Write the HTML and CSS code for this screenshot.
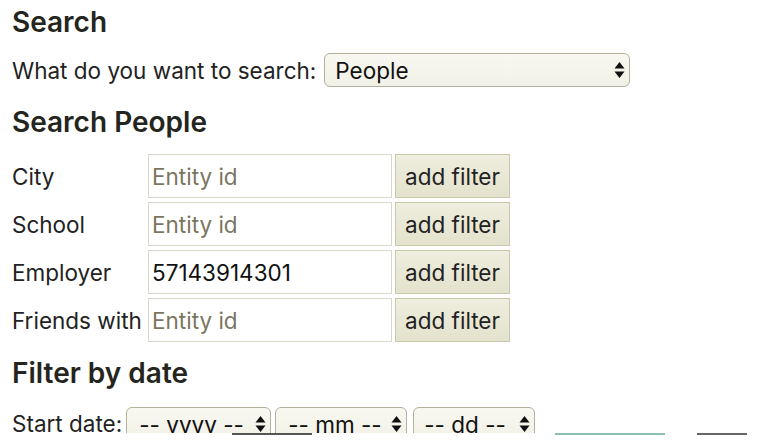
FILE: index.html
```html
<!DOCTYPE html>
<html>
<head>
<meta charset="utf-8">
<link rel="stylesheet" href="styles.css">
</head>
<body>
<div class="page">
  <h3 class="title t-search">Search</h3>
  <div class="line what">
    <span class="lbl">What do you want to search:</span>
    <div class="sel sel-main"><span>People</span>
      <svg class="arr" width="11" height="18" viewBox="0 0 11 18"><path d="M5.5 1 L10.5 7.5 H0.5 Z M5.5 17 L10.5 10.5 H0.5 Z" fill="#111"/></svg>
    </div>
  </div>
  <h3 class="title t-people">Search People</h3>
  <div class="filters">
    <span class="flabel">City</span>
    <div class="inp ph">Entity id</div>
    <div class="btn">add filter</div>
    <span class="flabel">School</span>
    <div class="inp ph">Entity id</div>
    <div class="btn">add filter</div>
    <span class="flabel">Employer</span>
    <div class="inp val">57143914301</div>
    <div class="btn">add filter</div>
    <span class="flabel">Friends with</span>
    <div class="inp ph">Entity id</div>
    <div class="btn">add filter</div>
  </div>
  <h3 class="title t-date">Filter by date</h3>
  <div class="daterow">
    <span class="lbl">Start date:</span>
    <div class="sel sel-y"><span>-- yyyy --</span>
      <svg class="arr" width="11" height="18" viewBox="0 0 11 18"><path d="M5.5 1 L10.5 7.5 H0.5 Z M5.5 17 L10.5 10.5 H0.5 Z" fill="#111"/></svg>
    </div>
    <div class="sel sel-m"><span>-- mm --</span>
      <svg class="arr" width="11" height="18" viewBox="0 0 11 18"><path d="M5.5 1 L10.5 7.5 H0.5 Z M5.5 17 L10.5 10.5 H0.5 Z" fill="#111"/></svg>
    </div>
    <div class="sel sel-d"><span>-- dd --</span>
      <svg class="arr" width="11" height="18" viewBox="0 0 11 18"><path d="M5.5 1 L10.5 7.5 H0.5 Z M5.5 17 L10.5 10.5 H0.5 Z" fill="#111"/></svg>
    </div>
  </div>
  <div class="cutline">
    <span class="seg seg1"></span>
    <span class="seg seg2"></span>
    <span class="seg seg3"></span>
  </div>
</div>
</body>
</html>
```

FILE: styles.css
```css
html, body {
  margin: 0;
  padding: 0;
  background: #ffffff;
  overflow: hidden;
}
body {
  font-family: Inter, "Liberation Sans", Arial, sans-serif;
  font-size: 22.5px;
  color: #222222;
}
.page {
  display: flex;
  flex-direction: column;
  align-items: flex-start;
  padding: 0 0 0 12px;
}
.title {
  margin: 0;
  font-size: 28px;
  font-weight: 600;
  line-height: 34px;
  color: #252520;
}
.t-search { margin-top: 5px; }
.line {
  display: flex;
  align-items: center;
  margin-top: 14px;
}
.lbl { white-space: nowrap; }
.sel {
  position: relative;
  display: flex;
  align-items: center;
  box-sizing: border-box;
  height: 34px;
  border: 1px solid #b3b09c;
  border-radius: 6px;
  background: linear-gradient(#f8f8f1, #f1f1e6);
  color: #111;
  padding-left: 10px;
}
.sel .arr {
  position: absolute;
  right: 4px;
  top: 7px;
}
.sel-main {
  width: 306px;
  margin-left: 8px;
}
.t-people { margin-top: 18px; }
.filters {
  display: grid;
  grid-template-columns: 133px 244px 115px;
  grid-auto-rows: 44px;
  column-gap: 3px;
  row-gap: 4px;
  margin-top: 15px;
  align-items: center;
}
.flabel { white-space: nowrap; }
.inp {
  box-sizing: border-box;
  height: 44px;
  border: 1px solid #dad8c6;
  background: #ffffff;
  display: flex;
  align-items: center;
  padding-left: 3px;
}
.ph { color: #7b7660; }
.val { color: #111; }
.btn {
  box-sizing: border-box;
  height: 44px;
  border: 1px solid #c9c7b0;
  background: linear-gradient(#efeedf, #e3e2cc);
  display: flex;
  align-items: center;
  justify-content: center;
  color: #222;
}
.t-date { margin-top: 14px; }
.daterow {
  display: flex;
  align-items: flex-start;
  margin-top: 17px;
  height: 26px;
  overflow: hidden;
}
.daterow .lbl {
  margin-top: 3px;
}
.sel-y { width: 145px; margin-left: 4px; padding-left: 12px; }
.sel-m { width: 132px; margin-left: 4px; padding-left: 12px; }
.sel-d { width: 122px; margin-left: 6px; padding-left: 10px; }
.cutline {
  position: relative;
  width: 755px;
  height: 3px;
}
.seg {
  position: absolute;
  top: 0;
  height: 2px;
}
.seg1 { left: 220px; width: 80px; background: #555; }
.seg2 { left: 543px; width: 110px; background: #8fbdb8; }
.seg3 { left: 685px; width: 50px; background: #666; }
```
